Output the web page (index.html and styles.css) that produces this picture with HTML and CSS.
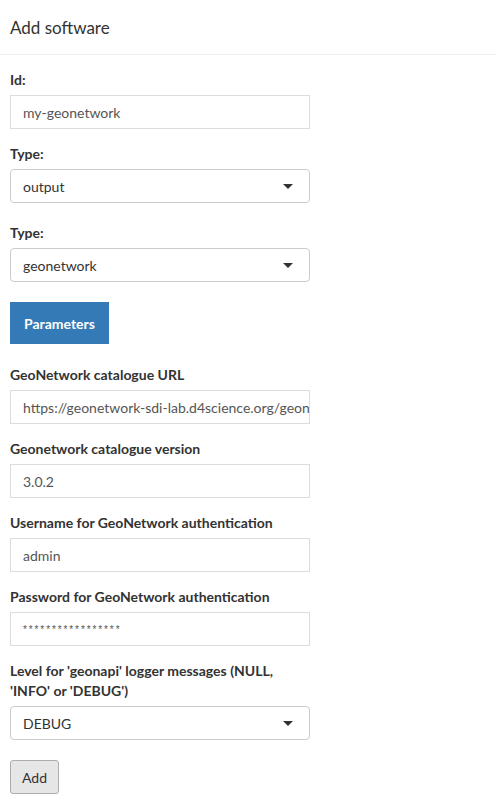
FILE: index.html
```html
<!DOCTYPE html>
<html>
<head>
<meta charset="utf-8">
<link rel="stylesheet" href="styles.css">
</head>
<body>
<div class="modal">
  <div class="modal-header"><h4 class="title">Add software</h4></div>
  <div class="modal-body">
    <div class="form-group">
      <label class="lbl">Id:</label>
      <div class="input">my-geonetwork</div>
    </div>
    <div class="form-group sel-group">
      <label class="lbl">Type:</label>
      <div class="select"><span>output</span><span class="caret"></span></div>
    </div>
    <div class="form-group sel-group">
      <label class="lbl">Type:</label>
      <div class="select"><span>geonetwork</span><span class="caret"></span></div>
    </div>
    <div class="btn-row"><button class="btn-primary">Parameters</button></div>
    <div class="form-group">
      <label class="lbl">GeoNetwork catalogue URL</label>
      <div class="input clip">https://geonetwork-sdi-lab.d4science.org/geonetwork</div>
    </div>
    <div class="form-group">
      <label class="lbl">Geonetwork catalogue version</label>
      <div class="input">3.0.2</div>
    </div>
    <div class="form-group">
      <label class="lbl">Username for GeoNetwork authentication</label>
      <div class="input">admin</div>
    </div>
    <div class="form-group">
      <label class="lbl">Password for GeoNetwork authentication</label>
      <div class="input pwd">*****************</div>
    </div>
    <div class="form-group sel-group">
      <label class="lbl">Level for 'geonapi' logger messages (NULL,<br>'INFO' or 'DEBUG')</label>
      <div class="select"><span>DEBUG</span><span class="caret"></span></div>
    </div>
    <button class="btn-default">Add</button>
  </div>
</div>
</body>
</html>
```
FILE: styles.css
```css
* { box-sizing: border-box; }
body {
  margin: 0;
  background: #fff;
  font-family: Lato, "Open Sans", sans-serif;
  font-size: 14px;
  color: #333;
}
.modal-header {
  height: 55px;
  padding: 0 10px;
  display: flex;
  align-items: center;
  border-bottom: 1px solid #eeeeee;
}
.title {
  margin: 0;
  font-size: 17px;
  font-weight: 400;
  color: #333;
}
.modal-body {
  padding: 15px 10px 0 10px;
}
.form-group {
  margin-bottom: 15px;
  width: 300px;
}
.sel-group { margin-bottom: 20px; }
.lbl {
  display: block;
  font-weight: 700;
  line-height: 20px;
  margin-bottom: 5px;
  color: #333;
  white-space: nowrap;
}
.input {
  height: 34px;
  border: 1px solid #dcdcdc;
  padding: 0 12px;
  display: flex;
  align-items: center;
  color: #555;
  white-space: nowrap;
  overflow: hidden;
}
.pwd {
  font-family: "Liberation Sans", sans-serif;
  font-size: 10px;
  letter-spacing: 1.9px;
}
.select {
  height: 34px;
  border: 1px solid #cccccc;
  border-radius: 4px;
  padding: 0 16px 0 12px;
  display: flex;
  align-items: center;
  justify-content: space-between;
  color: #333;
}
.caret {
  width: 0;
  height: 0;
  border-left: 5px solid transparent;
  border-right: 5px solid transparent;
  border-top: 5px solid #333;
}
.btn-row { margin-bottom: 21px; }
.btn-primary {
  display: block;
  width: 99px;
  height: 42px;
  border: 0;
  border-radius: 0;
  background: #337ab7;
  color: #fff;
  font-family: inherit;
  font-size: 14px;
  font-weight: 700;
}
.btn-default {
  width: 49px;
  height: 34px;
  border: 1px solid #adadad;
  border-radius: 3px;
  background: #e6e6e6;
  color: #333;
  font-family: inherit;
  font-size: 14px;
}
```
